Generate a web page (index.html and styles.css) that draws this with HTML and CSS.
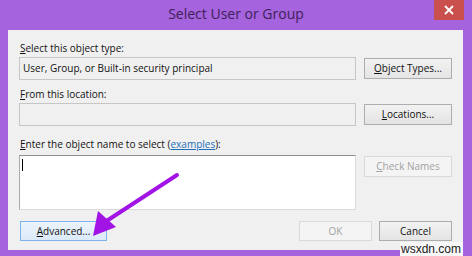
FILE: index.html
```html
<!DOCTYPE html>
<html>
<head>
<meta charset="utf-8">
<link rel="stylesheet" href="styles.css">
</head>
<body>
<div class="window">
  <div class="titlebar">
    <div class="title">Select User or Group</div>
    <div class="close">
      <svg width="10" height="10" viewBox="0 0 10 10"><path d="M1 1L9 9M9 1L1 9" stroke="#fff" stroke-width="1.8"/></svg>
    </div>
  </div>
  <div class="client">
    <div class="label"><u>S</u>elect this object type:</div>
    <div class="row">
      <div class="field ro">User, Group, or Built-in security principal</div>
      <div class="btn"><u>O</u>bject Types...</div>
    </div>
    <div class="label l2"><u>F</u>rom this location:</div>
    <div class="row">
      <div class="field ro"></div>
      <div class="btn"><u>L</u>ocations...</div>
    </div>
    <div class="label l3"><u>E</u>nter the object name to select (<span class="link">examples</span>):</div>
    <div class="row top">
      <div class="field area"><span class="caret"></span></div>
      <div class="btn disabled"><u>C</u>heck Names</div>
    </div>
    <div class="footer">
      <div class="btn adv"><u>A</u>dvanced...</div>
      <div class="spacer"></div>
      <div class="btn disabled ok">OK</div>
      <div class="btn cancel">Cancel</div>
    </div>
  </div>
  <svg class="arrow" width="472" height="256" viewBox="0 0 472 256">
    <path d="M177 175L105 222" stroke="#a214e6" stroke-width="4" stroke-linecap="round"/>
    <polygon points="93,236 98,211 116,227" fill="#a214e6"/>
  </svg>
  <div class="watermark">wsxdn.com</div>
</div>
</body>
</html>
```
FILE: styles.css
```css
* { box-sizing: border-box; }
html, body { margin: 0; padding: 0; }
body {
  width: 472px;
  height: 256px;
  overflow: hidden;
  background: #a563dd;
  font-family: "Open Sans", "Liberation Sans", sans-serif;
  font-size: 10px;
  color: #111;
}
.window {
  position: relative;
  width: 472px;
  height: 256px;
  display: flex;
  flex-direction: column;
}
.titlebar {
  height: 30px;
  display: flex;
  justify-content: center;
  align-items: flex-start;
}
.title {
  margin-top: 5px;
  font-size: 14px;
  line-height: 18px;
  color: #3e2159;
}
.close {
  position: absolute;
  left: 434px;
  top: 0;
  width: 30px;
  height: 20px;
  background: #c9504c;
  display: flex;
  align-items: center;
  justify-content: center;
}
.client {
  margin-left: 8px;
  width: 455px;
  height: 220px;
  background: #f0f0f0;
  padding: 11px 11px 0 11px;
  display: flex;
  flex-direction: column;
}
.label {
  line-height: 14px;
  height: 14px;
  margin-bottom: 2px;
  padding-left: 1px;
}
.l2 { margin-top: 7px; }
.l3 { margin-top: 11px; margin-bottom: 4px; }
.link { color: #1d6fb8; text-decoration: underline; }
.row {
  display: flex;
  gap: 8px;
  align-items: center;
}
.row.top { align-items: flex-start; }
.field {
  width: 337px;
  height: 23px;
  border: 1px solid #c6c6c6;
  line-height: 21px;
  padding-left: 3px;
}
.field.ro { background: #f0f0f0; }
.field.area {
  height: 55px;
  background: #fff;
  border-color: #dadada;
  border-top-color: #8c8c8c;
  border-left-color: #a8a8a8;
  padding: 3px 0 0 2px;
}
.caret {
  display: block;
  width: 1px;
  height: 12px;
  background: #000;
}
.btn {
  width: 88px;
  height: 21px;
  border: 1px solid #adadad;
  background: linear-gradient(#f2f2f2, #e4e4e4);
  text-align: center;
  line-height: 19px;
  color: #111;
}
.row.top .btn { margin-top: 1px; }
.btn.disabled {
  border-color: #d9d9d9;
  background: #f4f4f4;
  color: #a2a2a2;
}
.footer {
  margin-top: 11px;
  display: flex;
  align-items: center;
}
.spacer { flex: 1; }
.btn.adv {
  margin-left: 1px;
  width: 87px;
  height: 20px;
  line-height: 18px;
  border-color: #7db3e6;
  background: linear-gradient(#ecf4fc, #dbeaf9);
}
.btn.ok { width: 73px; height: 20px; line-height: 18px; }
.btn.cancel { width: 73px; height: 20px; line-height: 18px; margin-left: 7px; }
.arrow {
  position: absolute;
  left: 0;
  top: 0;
}
.watermark {
  position: absolute;
  left: 400px;
  top: 242px;
  width: 63px;
  height: 14px;
  background: #f8f8f8;
  font-family: "Liberation Sans", sans-serif;
  font-size: 12px;
  line-height: 14px;
  color: #1a1a1a;
  text-align: right;
  padding-right: 2px;
}
```
